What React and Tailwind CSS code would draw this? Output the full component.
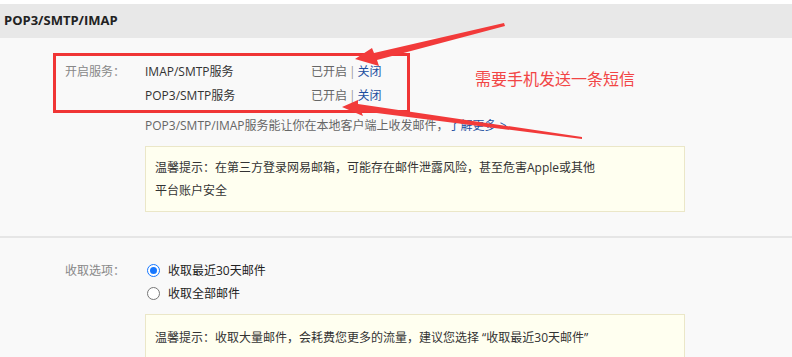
const font = { fontFamily: '"Open Sans", "Noto Sans CJK SC", sans-serif' };

const Row = ({ name }) => (
  <div className="flex h-[24px] items-center">
    <span className="w-[166px] text-[#333]">{name}</span>
    <span className="text-[#666]">已开启</span>
    <span className="mx-[2px] text-[#999]">|</span>
    <span className="text-[#1c4ea0]">关闭</span>
  </div>
);

const Radio = ({ checked, label }) => (
  <label className="flex h-[23px] items-center">
    <span
      className={
        checked
          ? "mr-[8px] ml-[2px] flex h-[13px] w-[13px] items-center justify-center rounded-full border border-[#1677ff] bg-white"
          : "mr-[8px] ml-[2px] h-[13px] w-[13px] rounded-full border border-[#777] bg-white"
      }
    >
      {checked && <span className="h-[7px] w-[7px] rounded-full bg-[#1677ff]" />}
    </span>
    <span className="text-[#222]">{label}</span>
  </label>
);

const Tip = ({ children, className }) => (
  <div className={"border border-[#ebe7c8] bg-[#fffff0] px-[9px] leading-[23px] text-[#333] " + className}>
    {children}
  </div>
);

export default function App() {
  return (
    <div className="relative h-[357px] w-[792px] overflow-hidden bg-[#f9f9f9] text-[12px]" style={font}>
      <div className="h-[4px] bg-white" />
      <div className="flex h-[34px] items-center bg-[#e8e8e8] pl-[4px] text-[13px] font-bold text-[#222]">
        POP3/SMTP/IMAP
      </div>

      {/* 服务 */}
      <div className="flex pt-[22px] pl-[65px]">
        <div className="w-[80px] leading-[24px] text-[#888]">开启服务：</div>
        <div className="flex flex-col">
          <Row name="IMAP/SMTP服务" />
          <Row name="POP3/SMTP服务" />
          <div className="mt-[6px] flex h-[24px] items-center text-[#666]">
            POP3/SMTP/IMAP服务能让你在本地客户端上收发邮件，
            <span className="text-[#1c4ea0]">了解更多 &gt;</span>
          </div>
          <Tip className="mt-[8px] w-[540px] py-[9px]">
            温馨提示：在第三方登录网易邮箱，可能存在邮件泄露风险，甚至危害Apple或其他
            <br />
            平台账户安全
          </Tip>
        </div>
      </div>

      <div className="mt-[24px] h-[2px] bg-[#e6e6e6]" />

      {/* 收取选项 */}
      <div className="flex pt-[21px] pl-[65px]">
        <div className="w-[80px] leading-[24px] text-[#888]">收取选项：</div>
        <div className="flex flex-col">
          <Radio checked label="收取最近30天邮件" />
          <Radio label="收取全部邮件" />
          <Tip className="mt-[9px] h-[60px] w-[540px] pt-[11px]">
            温馨提示：收取大量邮件，会耗费您更多的流量，建议您选择 “收取最近30天邮件”
          </Tip>
        </div>
      </div>

      {/* 标注 */}
      <div className="absolute top-[53px] left-[53px] h-[60px] w-[357px] border-[3px] border-[#f03535]" />
      <div className="absolute top-[68px] left-[475px] text-[16px] leading-[22px] text-[#f24545]">
        需要手机发送一条短信
      </div>
      <svg className="absolute top-0 left-0" width="792" height="357">
        <polygon
          points="504,23 374,53 372,48 355,59 379,66 377,60 505,26"
          fill="#f23a3a"
        />
        <polygon
          points="342,107 358,100 358,104 582,137 582,139 361,111 363,116"
          fill="#f23a3a"
        />
      </svg>
    </div>
  );
}
